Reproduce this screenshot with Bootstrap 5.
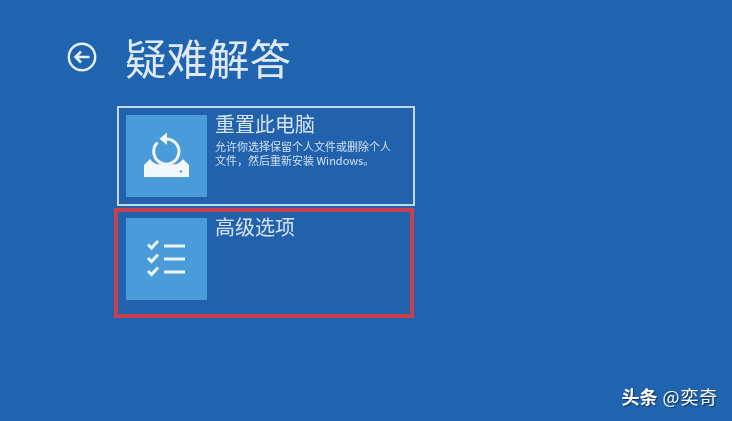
<!DOCTYPE html>
<html lang="zh">
<head>
<meta charset="utf-8">
<title>疑难解答</title>
<link href="https://cdn.jsdelivr.net/npm/bootstrap@5.3.0/dist/css/bootstrap.min.css" rel="stylesheet">
<style>
html,body{height:421px;overflow:hidden}
body{background:#2064b0;color:#e6f0f8;font-family:"Liberation Sans","Noto Sans CJK SC",sans-serif;width:732px}
.scene{height:421px;padding:32px 0 0 67px;position:relative;filter:blur(.5px)}
.headline{height:50px;gap:28px;margin-bottom:24px}
.headline svg{width:30px;height:30px;flex:none}
.headline h1{font-size:41.500px;line-height:50px;margin:0;font-weight:400;color:#dfeaf5;font-family:"Noto Sans CJK SC",sans-serif}
.stack{margin-left:47px;width:301px}
.opt{display:flex;align-items:flex-start;background:#2261ab}
.opt-reset{margin-left:3px;width:298px;height:100px;border:2px solid #c3d8ee;padding:7px 7px;gap:8px}
.opt-adv{margin-top:2px;width:300px;height:110px;border:4px solid #c8404f;padding:6px 8px;gap:8px}
.tile{width:81px;height:82px;flex:none;background:#4a9bd9;display:flex;align-items:center;justify-content:center}
.opt-name{font-size:20px;line-height:24px;font-weight:400;color:#d5e4f2;font-family:"Noto Sans CJK SC",sans-serif;margin:-3px 0 0}
.opt-desc{font-size:11px;line-height:14px;color:#d0e1f1;margin:3px 0 0;width:178px;font-family:"Noto Sans CJK SC",sans-serif}
.mark-line{position:absolute;right:14px;bottom:13px;font-size:18px;line-height:24px;color:#fff;text-shadow:1px 1px 1px rgba(0,0,0,.55);font-family:"Noto Sans CJK SC",sans-serif;white-space:nowrap}
.mark-line b{font-weight:700;margin-right:5px;letter-spacing:0}
.mark-at{letter-spacing:.8px}
</style>
</head>
<body>
<div class="scene">
  <div class="d-flex align-items-center headline">
    <svg viewBox="0 0 30 30" fill="none" stroke="#e6f0f8" stroke-width="2.4" aria-hidden="true">
      <circle cx="15" cy="15" r="13.2"/>
      <path d="M22.5 15H8.5M14 9.5 8.5 15l5.5 5.5" stroke-width="2.6"/>
    </svg>
    <h1>疑难解答</h1>
  </div>
  <div class="stack">
    <div class="opt opt-reset">
      <div class="tile">
        <svg width="81" height="82" viewBox="0 0 81 82" aria-hidden="true">
          <path d="M31.5 27.5a12.6 12.6 0 1 0 9-3.6" fill="none" stroke="#f2f7fb" stroke-width="3"/>
          <path d="M41 17.5v12.5l-7.500-6.200z" fill="#f2f7fb"/>
          <path d="M24 44c1.500 2 3.500 4 7 5.200h19c3.500-1.200 5.500-3.200 7-5.200l6 6v12H18V50z" fill="#f2f7fb"/>
          <circle cx="55" cy="56.500" r="1.200" fill="#4a9bd9"/>
        </svg>
      </div>
      <div>
        <h2 class="opt-name">重置此电脑</h2>
        <p class="opt-desc">允许你选择保留个人文件或删除个人文件，然后重新安装 Windows。</p>
      </div>
    </div>
    <div class="opt opt-adv">
      <div class="tile">
        <svg width="81" height="82" viewBox="0 0 81 82" fill="none" stroke="#eef5fa" aria-hidden="true">
          <path d="M22 26.500l3.500 3.500 6.500-7M22 40l3.500 3.500 6.500-7M22 53l3.500 3.500 6.500-7" stroke-width="3"/>
          <path d="M38 28h21M38 41h21M38 54h21" stroke-width="3"/>
        </svg>
      </div>
      <h2 class="opt-name">高级选项</h2>
    </div>
  </div>
  <div class="mark-line"><b>头条</b><span class="mark-at">@奕奇</span></div>
</div>
<script src="https://cdn.jsdelivr.net/npm/bootstrap@5.3.0/dist/js/bootstrap.bundle.min.js"></script>
</body>
</html>
